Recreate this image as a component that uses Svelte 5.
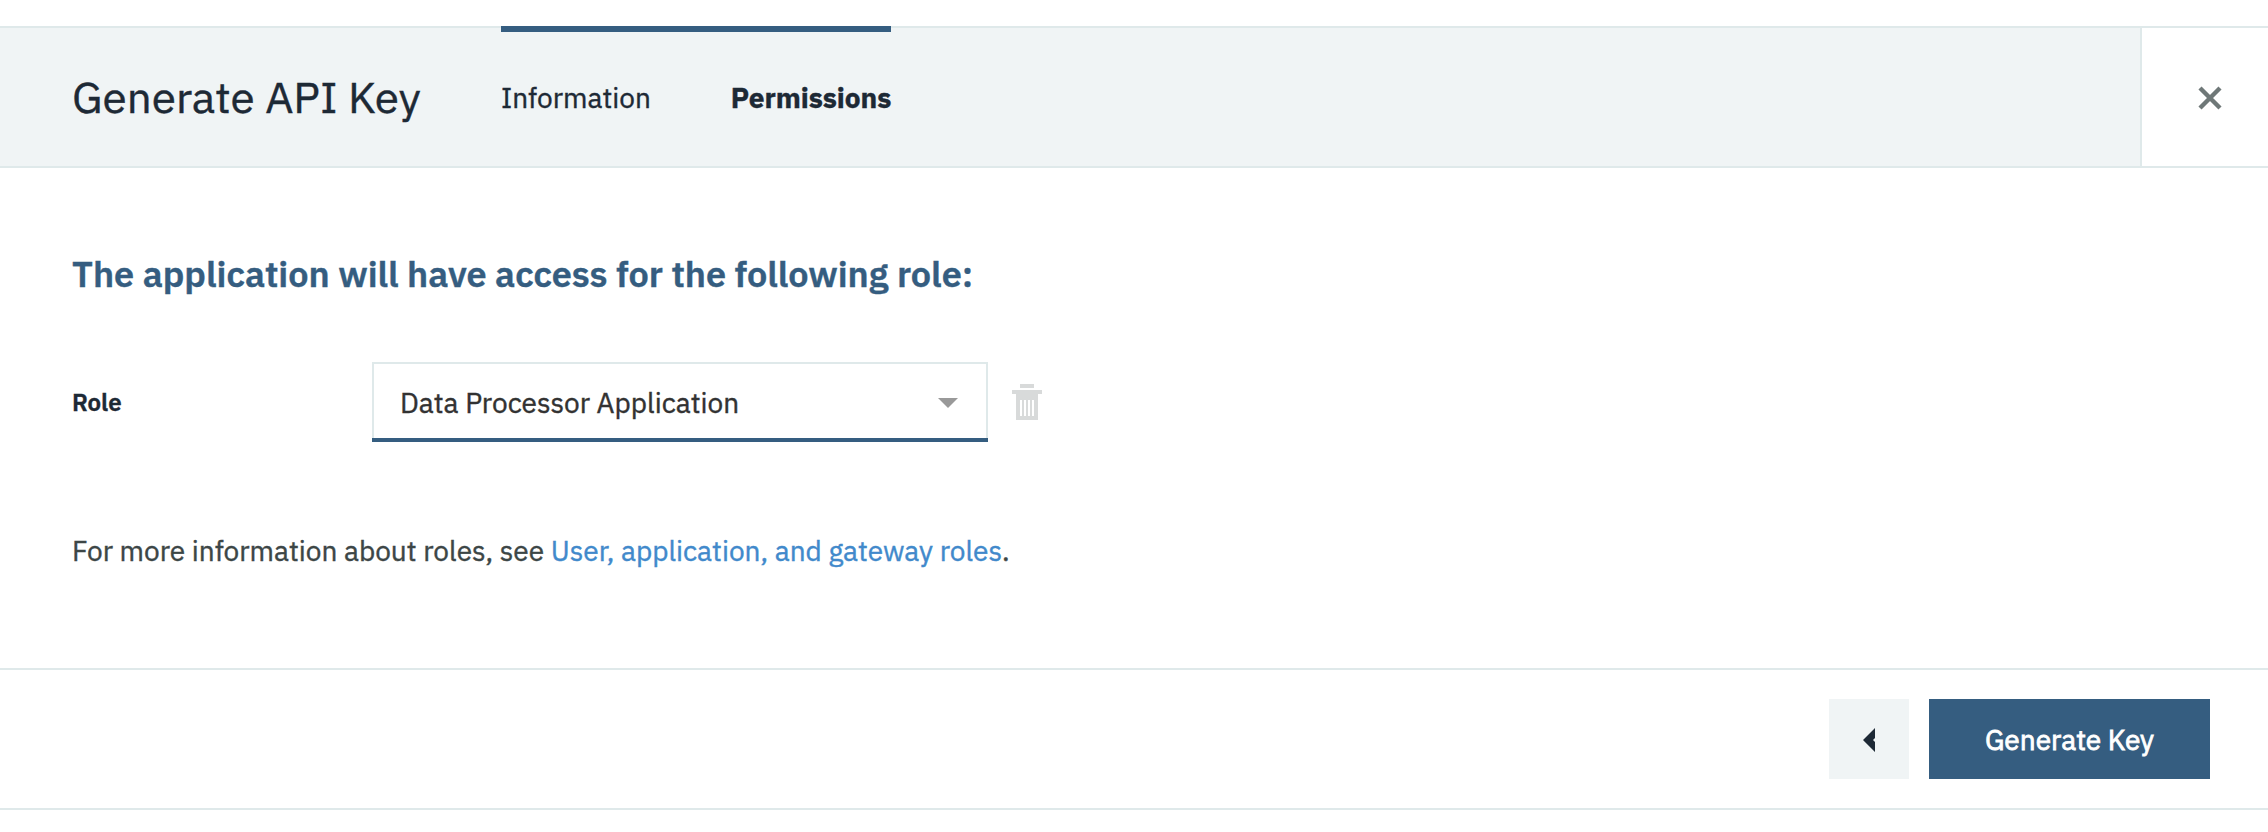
<script>
  let role = $state('Data Processor Application');
  const tabs = [
    { label: 'Information', current: false },
    { label: 'Permissions', current: true }
  ];
</script>

<main class="dialog">
  <header class="head">
    <h1>Generate API Key</h1>
    <nav class="steps">
      {#each tabs as tab}
        <span class="step" class:current={tab.current}>{tab.label}</span>
      {/each}
    </nav>
    <button class="close" aria-label="Close">
      <svg width="24" height="24" viewBox="0 0 24 24">
        <path d="M2 2 22 22M22 2 2 22" stroke="#6f7878" stroke-width="4.4" fill="none" />
      </svg>
    </button>
  </header>

  <section class="body">
    <h2>The application will have access for the following role:</h2>
    <div class="row">
      <span class="label">Role</span>
      <button class="select">
        <span>{role}</span>
        <svg width="20" height="10" viewBox="0 0 20 10"><path d="M0 0H20L10 10Z" fill="#999" /></svg>
      </button>
      <svg class="trash" width="30" height="36" viewBox="0 0 30 36">
        <path
          fill="#d8dada"
          fill-rule="evenodd"
          d="M8 0h14v4H8zM0 6h30v4h-4v26H4V10H0zM8 16v16h2V16zM12 16v16h2V16zM16 16v16h2V16zM20 16v16h2V16z"
        />
      </svg>
    </div>
    <p>For more information about roles, see <a href="#roles">User, application, and gateway roles</a>.</p>
  </section>

  <footer class="foot">
    <button class="back" aria-label="Back">
      <svg width="12" height="24" viewBox="0 0 12 24"><path d="M12 0V10L10 12L12 14V24L0 12Z" fill="#1d2935" /></svg>
    </button>
    <button class="primary">Generate Key</button>
  </footer>
</main>

<style>
  :global(body) {
    background: #fff;
  }

  .dialog {
    box-sizing: border-box;
    height: 832px;
    padding-top: 26px;
    overflow: hidden;
    font-family: 'IBM Plex Sans', Roboto, sans-serif;
    font-size: 28px;
    color: #1d2935;
    -webkit-text-stroke: 0.4px currentColor;
  }

  .dialog * {
    box-sizing: border-box;
  }

  h1,
  h2,
  p {
    margin: 0;
  }

  button {
    margin: 0;
    padding: 0;
    border: 0;
    font: inherit;
    color: inherit;
    -webkit-text-stroke: 0.4px currentColor;
  }

  svg {
    display: block;
    flex: none;
  }

  .head {
    display: flex;
    height: 142px;
    padding-left: 72px;
    border-top: 2px solid #dfe9ea;
    border-bottom: 2px solid #dfe9ea;
    background: #f0f4f5;
  }

  h1 {
    width: 429px;
    font-size: 44px;
    font-weight: 400;
    line-height: 138px;
  }

  .steps {
    display: flex;
    gap: 80px;
    margin-top: -2px;
    border-top: 6px solid #355d80;
    line-height: 132px;
  }

  .step.current {
    font-weight: 700;
  }

  .close {
    display: flex;
    align-items: center;
    justify-content: center;
    width: 128px;
    margin-left: auto;
    padding-left: 10px;
    padding-top: 1px;
    border-left: 2px solid #dfe9ea;
    background: #fff;
  }

  .body {
    height: 500px;
    padding: 79px 72px 0;
  }

  h2 {
    font-size: 36px;
    font-weight: 600;
    line-height: 54px;
    color: #355d80;
  }

  .row {
    display: flex;
    align-items: center;
    height: 80px;
    margin-top: 61px;
  }

  .label {
    width: 300px;
    font-size: 24px;
    font-weight: 600;
  }

  .select {
    display: flex;
    align-items: center;
    justify-content: space-between;
    width: 616px;
    height: 76px;
    margin-bottom: 4px;
    padding: 0 28px 0 26px;
    border: 2px solid #dfe9ea;
    border-bottom: 0;
    box-shadow: 0 4px 0 #355d80;
    background: #fff;
    color: #323232;
  }

  .select span {
    margin-top: 2px;
  }

  .select svg {
    margin-top: 4px;
  }

  .trash {
    margin-left: 24px;
  }

  p {
    margin-top: 87px;
    line-height: 44px;
    color: #3c4646;
  }

  a {
    color: #4189cb;
    text-decoration: none;
  }

  .foot {
    display: flex;
    align-items: center;
    justify-content: flex-end;
    gap: 20px;
    height: 142px;
    padding-right: 58px;
    border-top: 2px solid #dfe9ea;
    border-bottom: 2px solid #dfe9ea;
  }

  .back {
    display: flex;
    align-items: center;
    justify-content: center;
    width: 80px;
    height: 80px;
    padding-top: 2px;
    background: #f0f4f5;
  }

  .primary {
    width: 281px;
    height: 80px;
    background: #355d80;
    color: #fff;
    font-weight: 400;
    -webkit-text-stroke-width: 0.8px;
  }
</style>
